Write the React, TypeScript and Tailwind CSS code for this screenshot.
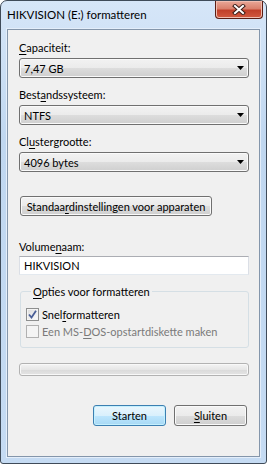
import React from "react";

const comboBg =
  "bg-[linear-gradient(to_bottom,#f2f2f2_0%,#ebebeb_50%,#dddddd_50%,#cfcfcf_100%)]";

function U({ children }: { children: React.ReactNode }) {
  return <span className="underline decoration-1 underline-offset-[2px]">{children}</span>;
}

function Label({ children, className = "" }: { children: React.ReactNode; className?: string }) {
  return <div className={`leading-[15px] h-[15px] ${className}`}>{children}</div>;
}

function Combo({ value }: { value: string }) {
  return (
    <div
      className={`mt-[3px] flex h-[20px] w-[230px] items-center rounded-[3px] border border-[#707070] ${comboBg} pl-[4px] pr-[4px] shadow-[inset_0_0_0_1px_#fafafa]`}
    >
      <span className="flex-1 leading-[15px]">{value}</span>
      <svg width="7" height="4" viewBox="0 0 7 4">
        <polygon points="0,0 7,0 3.5,4" fill="#000" />
      </svg>
    </div>
  );
}

function Check({ checked, disabled, children }: { checked?: boolean; disabled?: boolean; children: React.ReactNode }) {
  return (
    <div className={`flex h-[15px] items-center gap-[3px] ${disabled ? "text-[#7a7a7a]" : ""}`}>
      <div
        className={`flex h-[13px] w-[13px] items-center justify-center border ${
          disabled
            ? "border-[#b1b1b1] bg-[#f4f4f4]"
            : "border-[#8e8f8f] bg-[linear-gradient(135deg,#dcdcdc,#fdfdfd)] shadow-[inset_0_0_0_1px_#f4f4f4]"
        }`}
      >
        {checked && (
          <svg width="9" height="9" viewBox="0 0 9 9">
            <path d="M1 4.5 L3.5 7.5 L8 0.8" fill="none" stroke="#4a5f97" strokeWidth="1.8" />
          </svg>
        )}
      </div>
      <span className="whitespace-nowrap leading-[15px]">{children}</span>
    </div>
  );
}

function Btn({ children, className = "", primary }: { children: React.ReactNode; className?: string; primary?: boolean }) {
  return (
    <div
      className={`flex h-[21px] items-center justify-center whitespace-nowrap rounded-[3px] border leading-[15px] ${
        primary
          ? "border-[#3c7fb1] bg-[linear-gradient(to_bottom,#eaf6fd_0%,#d9f0fc_50%,#bee6fd_50%,#a7d9f5_100%)] shadow-[inset_0_0_0_1px_#c4f0fe]"
          : `border-[#707070] ${comboBg} shadow-[inset_0_0_0_1px_#fafafa]`
      } ${className}`}
    >
      <span>{children}</span>
    </div>
  );
}

export default function App() {
  return (
    <div className="min-h-screen bg-white">
      <div className="flex h-[464px] w-[267px] flex-col rounded-t-[7px] rounded-b-[3px] border border-[#3f4b59] bg-[linear-gradient(to_bottom,#d6e6f8,#c0d7f0_30%,#c5dbf3)] font-['Lato',sans-serif] text-[11px] text-black">
        {/* title bar */}
        <div className="flex h-[28px] items-start justify-between">
          <div className="pl-[6px] pt-[6px] text-[11.5px] leading-[15px]">HIKVISION (E:) formatteren</div>
          <div className="mr-[3px] flex h-[18px] w-[48px] items-center justify-center rounded-b-[4px] border border-t-0 border-[#5b1e14] bg-[linear-gradient(to_bottom,#e9a898_0%,#d9806c_45%,#c1402a_55%,#d25a40_100%)] shadow-[inset_0_0_0_1px_#f0bdb0]">
            <svg width="14" height="11" viewBox="0 0 14 11">
              <path d="M3 2 L11 9 M11 2 L3 9" stroke="#3b1d18" strokeWidth="4" strokeLinecap="square" />
              <path d="M3 2 L11 9 M11 2 L3 9" stroke="#ffffff" strokeWidth="2" strokeLinecap="square" />
            </svg>
          </div>
        </div>

        {/* client area */}
        <div className="mx-[6px] mb-[6px] flex flex-1 flex-col border border-[#8496ab] bg-[#f0f0f0] pl-[11px] pr-[10px] shadow-[0_0_0_1px_#e4eefa]">
          <Label className="mt-[10px]">
            <U>C</U>apaciteit:
          </Label>
          <Combo value="7,47 GB" />

          <Label className="mt-[9px]">
            Best<U>a</U>ndssysteem:
          </Label>
          <Combo value="NTFS" />

          <Label className="mt-[9px]">
            Cl<U>u</U>stergrootte:
          </Label>
          <Combo value="4096 bytes" />

          <Btn className="ml-[1px] mt-[24px] !h-[20px] w-[192px]">
            Standaa<U>r</U>dinstellingen voor apparaten
          </Btn>

          <Label className="mt-[23px]">
            Volume<U>n</U>aam:
          </Label>
          <div className="mt-[2px] flex h-[19px] w-[230px] items-center border border-[#abadb3] border-x-[#dbdfe6] border-b-[#e3e9ef] bg-white pl-[4px] leading-[15px]">
            HIKVISION
          </div>

          <fieldset className="ml-[1px] mt-[9px] w-[229px] rounded-[3px] border border-[#d5dfe5] pb-[8px] pl-[5px]">
            <legend className="ml-[5px] px-[2px] leading-[15px]">
              <U>O</U>pties voor formatteren
            </legend>
            <div className="mt-[8px] flex flex-col gap-[2px]">
              <Check checked>
                Snel<U>f</U>ormatteren
              </Check>
              <Check disabled>
                Een MS-<U>D</U>OS-opstartdiskette maken
              </Check>
            </div>
          </fieldset>

          <div className="mt-[15px] h-[13px] w-[230px] rounded-[3px] border border-[#b2b2b2] bg-[linear-gradient(to_bottom,#f4f4f4,#e6e6e6_50%,#dadada_51%,#e4e4e4)] shadow-[inset_0_0_0_1px_#f8f8f8]" />

          <div className="mr-[2px] mt-[29px] flex justify-end gap-[8px]">
            <Btn primary className="w-[73px]">
              Starten
            </Btn>
            <Btn className="w-[73px]">
              <U>S</U>luiten
            </Btn>
          </div>
        </div>
      </div>
    </div>
  );
}
